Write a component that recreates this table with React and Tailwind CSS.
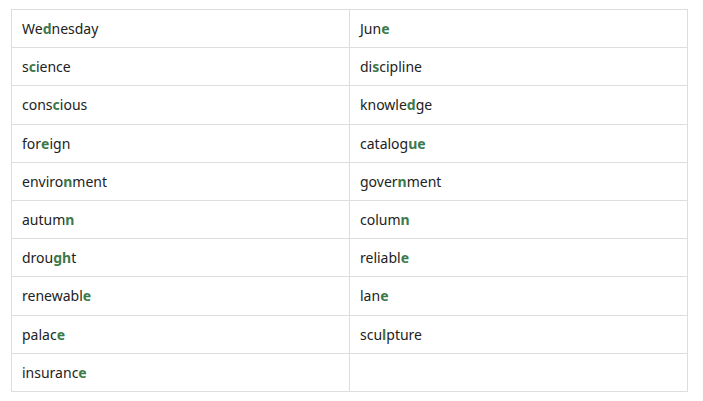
const rows = [
  [["We", "d", "nesday"], ["Jun", "e", ""]],
  [["s", "c", "ience"], ["di", "s", "cipline"]],
  [["cons", "c", "ious"], ["knowle", "d", "ge"]],
  [["for", "e", "ign"], ["catalog", "ue", ""]],
  [["enviro", "n", "ment"], ["gover", "n", "ment"]],
  [["autum", "n", ""], ["colum", "n", ""]],
  [["drou", "gh", "t"], ["reliabl", "e", ""]],
  [["renewabl", "e", ""], ["lan", "e", ""]],
  [["palac", "e", ""], ["scu", "l", "pture"]],
  [["insuranc", "e", ""], null],
];

function Word({ parts }) {
  if (!parts) return null;
  const [before, mark, after] = parts;
  return (
    <>
      {before}
      <b className="font-bold text-[#3c7a4c]">{mark}</b>
      {after}
    </>
  );
}

export default function App() {
  return (
    <div className="min-h-screen bg-white pt-[9px] pl-[11px] font-['Noto_Sans',sans-serif] text-[14px] text-[#222]">
      <table className="w-[677px] table-fixed border-collapse">
        <tbody>
          {rows.map((row, i) => (
            <tr key={i}>
              {row.map((cell, j) => (
                <td
                  key={j}
                  className="h-[38.2px] border border-[#dddddd] px-[10px] pt-[1px] align-middle leading-[20px]"
                >
                  <Word parts={cell} />
                </td>
              ))}
            </tr>
          ))}
        </tbody>
      </table>
    </div>
  );
}
